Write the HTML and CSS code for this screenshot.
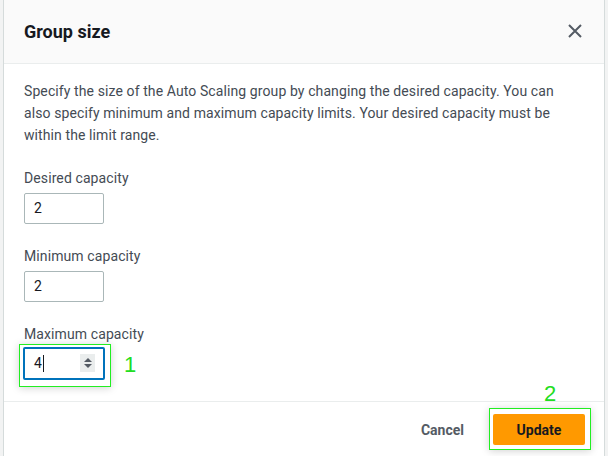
FILE: index.html
```html
<!DOCTYPE html>
<html>
<head>
<meta charset="utf-8">
<link rel="stylesheet" href="styles.css">
</head>
<body>
<div class="modal">
  <div class="header">
    <h2 class="title">Group size</h2>
    <button class="close" aria-label="Close">
      <svg width="14" height="14" viewBox="0 0 14 14"><path d="M1 1 L13 13 M13 1 L1 13" stroke="#545b64" stroke-width="2" fill="none"/></svg>
    </button>
  </div>
  <div class="body">
    <p class="desc">Specify the size of the Auto Scaling group by changing the desired capacity. You can also specify minimum and maximum capacity limits. Your desired capacity must be within the limit range.</p>
    <div class="field">
      <label class="label">Desired capacity</label>
      <div class="input">2</div>
    </div>
    <div class="field">
      <label class="label">Minimum capacity</label>
      <div class="input">2</div>
    </div>
    <div class="field">
      <label class="label">Maximum capacity</label>
      <div class="focus-wrap">
        <div class="input focused"><span class="val">4</span><span class="caret"></span>
          <span class="spin"><svg width="10" height="14" viewBox="0 0 10 14"><path d="M1 6 L5 2 L9 6 Z M1 8 L5 12 L9 8 Z" fill="#545b64"/></svg></span>
        </div>
        <div class="mark mark1"></div>
        <span class="num num1">1</span>
      </div>
    </div>
  </div>
  <div class="footer">
    <button class="cancel">Cancel</button>
    <div class="update-wrap">
      <button class="update">Update</button>
      <div class="mark mark2"></div>
      <span class="num num2">2</span>
    </div>
  </div>
</div>
</body>
</html>
```
FILE: styles.css
```css
* { box-sizing: border-box; }
html, body { margin: 0; padding: 0; }
body {
  width: 608px;
  height: 456px;
  overflow: hidden;
  background: #f2f3f3;
  font-family: Roboto, "Noto Sans", sans-serif;
  color: #16191f;
}
.modal {
  margin-left: 3px;
  width: 602px;
  height: 456px;
  background: #fff;
  border-left: 1px solid #d5dbdb;
  border-right: 1px solid #d5dbdb;
  display: flex;
  flex-direction: column;
}
.header {
  flex: 0 0 64px;
  height: 64px;
  background: #fafafa;
  border-bottom: 1px solid #eaeded;
  display: flex;
  align-items: center;
  justify-content: space-between;
  padding: 0 20px 0 20px;
}
.title {
  margin: 0;
  font-size: 18px;
  font-weight: 700;
  color: #16191f;
  padding-bottom: 1px;
}
.close {
  border: 0;
  background: none;
  padding: 0;
  width: 14px;
  height: 14px;
  margin-right: 2px;
  margin-bottom: 1px;
  display: flex;
}
.body {
  padding: 16px 20px 0 20px;
  flex: 1 1 auto;
  min-height: 0;
}
.desc {
  margin: 0 0 21px 0;
  font-size: 14px;
  line-height: 22px;
  letter-spacing: 0.1px;
  color: #444b54;
  max-width: 548px;
}
.field {
  display: flex;
  flex-direction: column;
  align-items: flex-start;
  margin-bottom: 21px;
}
.field:last-child { margin-bottom: 0; }
.label {
  font-size: 14px;
  line-height: 22px;
  letter-spacing: 0.1px;
  color: #444b54;
  margin-bottom: 4px;
}
.input {
  width: 80px;
  height: 31px;
  border: 1px solid #aab7b8;
  border-radius: 2px;
  font-size: 14px;
  line-height: 29px;
  padding-left: 9px;
  color: #16191f;
  position: relative;
  display: flex;
  align-items: center;
}
.focus-wrap { position: relative; height: 31px; }
.input.focused {
  width: 82px;
  height: 33px;
  margin-left: -1px;
  margin-top: -2px;
  border: 2px solid #0073bb;
  padding-left: 9px;
}
.caret {
  display: inline-block;
  width: 1px;
  height: 17px;
  background: #16191f;
  margin-left: 1px;
}
.spin {
  position: absolute;
  left: 55px;
  top: 5px;
  width: 15px;
  height: 18px;
  background: #eaeded;
  display: flex;
  align-items: center;
  justify-content: center;
}
.mark {
  position: absolute;
  border: 1px solid #22ee22;
  box-shadow: 0 1px 8px rgba(0,0,0,0.18);
}
.mark1 {
  left: -5px;
  top: -5px;
  width: 92px;
  height: 43px;
}
.num {
  position: absolute;
  color: #22dd22;
  font-family: "Liberation Sans", Arial, sans-serif;
  font-size: 22px;
  line-height: 22px;
}
.num1 { left: 100px; top: 5px; }
.footer {
  flex: 0 0 55px;
  height: 55px;
  border-top: 1px solid #eaeded;
  display: flex;
  justify-content: flex-end;
  align-items: flex-start;
  padding: 12px 19px 0 0;
}
.cancel {
  border: 0;
  background: none;
  font-family: inherit;
  font-size: 14px;
  font-weight: 700;
  color: #545b64;
  height: 32px;
  padding: 0 20px;
  margin-right: 9px;
}
.update-wrap { position: relative; }
.update {
  width: 92px;
  height: 31px;
  border: 0;
  border-radius: 2px;
  background: #ff9900;
  font-family: inherit;
  font-size: 14px;
  font-weight: 700;
  color: #16191f;
}
.mark2 {
  left: -4px;
  top: -6px;
  width: 102px;
  height: 42px;
}
.num2 { left: 51px; top: -31px; }
```
